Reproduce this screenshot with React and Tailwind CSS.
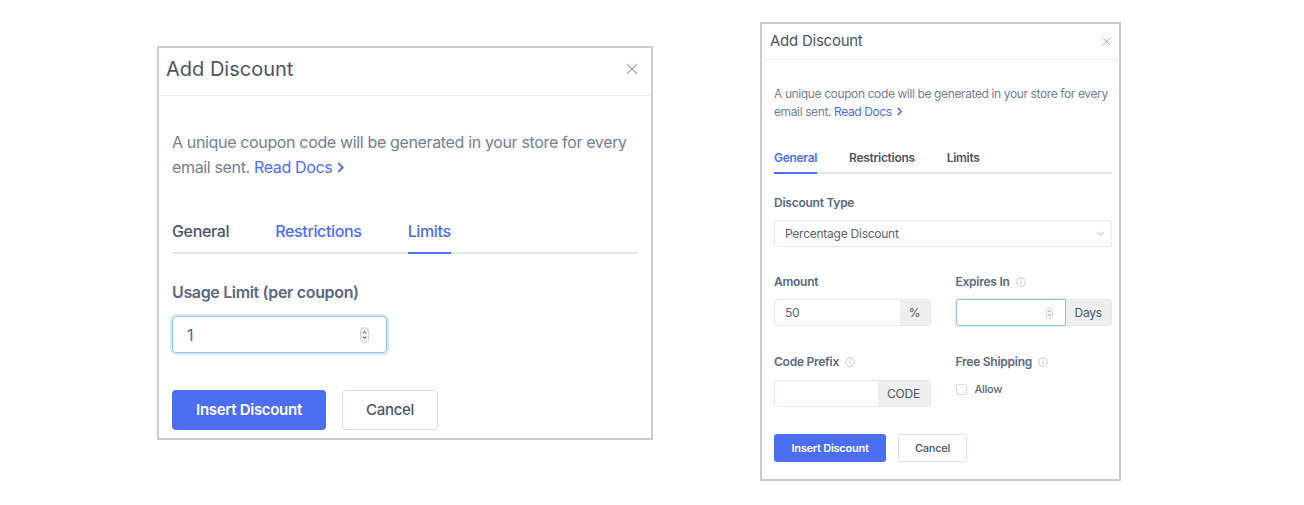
import React from "react";

const font = { fontFamily: "Inter, 'Noto Sans', sans-serif" };

function CloseIcon({ size }) {
  return (
    <svg width={size} height={size} viewBox="0 0 12 12" fill="none" stroke="#a0a8b4" strokeWidth="1.1">
      <path d="M1 1 L11 11 M11 1 L1 11" />
    </svg>
  );
}

function Chevron({ size }) {
  return (
    <svg width={size} height={size} viewBox="0 0 10 10" fill="none" stroke="#4c6ef5" strokeWidth="1.8" strokeLinecap="round" strokeLinejoin="round" className="inline-block align-middle ml-[3px] -mt-[2px]">
      <path d="M3.5 1.5 L7 5 L3.5 8.5" />
    </svg>
  );
}

function Spinner({ w, h }) {
  return (
    <svg width={w} height={h} viewBox="0 0 8 14" fill="none">
      <rect x="0.5" y="0.5" width="7" height="13" rx="3.5" stroke="#c9ced6" fill="#fafafa" />
      <path d="M2.5 5.5 L4 4 L5.5 5.5" stroke="#5a6270" strokeWidth="0.9" />
      <path d="M2.5 8.5 L4 10 L5.5 8.5" stroke="#5a6270" strokeWidth="0.9" />
    </svg>
  );
}

function Info() {
  return (
    <svg width="10" height="10" viewBox="0 0 10 10" fill="none" className="ml-[6px]">
      <circle cx="5" cy="5" r="4.3" stroke="#b5bcc7" strokeWidth="0.8" />
      <path d="M5 4.3 V7.3" stroke="#b5bcc7" strokeWidth="0.9" />
      <circle cx="5" cy="2.9" r="0.55" fill="#b5bcc7" />
    </svg>
  );
}

function LeftDialog() {
  return (
    <div className="mt-[46px] w-[496px] h-[394px] border-2 border-[#cccccc] bg-white flex flex-col">
      <div className="h-[48px] border-b border-[#edf0f4] flex items-start justify-between pl-[7px] pr-[13px] pt-[7px]">
        <span className="text-[20px] leading-[28px] text-[#4a5568]">Add Discount</span>
        <span className="mt-[8px]"><CloseIcon size={12} /></span>
      </div>
      <div className="pl-[13px] pr-[14px] pt-[34px] flex flex-col">
        <p className="text-[16px] leading-[25px] text-[#718096] tracking-[-0.35px]">
          A unique coupon code will be generated in your store for every email sent.{" "}
          <span className="text-[#4c6ef5]">Read Docs</span>
          <Chevron size={11} />
        </p>
        <div className="mt-[39px] flex gap-[46px] border-b-2 border-[#e2e8f0] text-[16px] leading-[24px] font-medium tracking-[-0.35px]">
          <span className="pb-[9px] -mb-[2px] text-[#4a5568]">General</span>
          <span className="pb-[9px] -mb-[2px] text-[#4c6ef5]">Restrictions</span>
          <span className="pb-[9px] -mb-[2px] text-[#4c6ef5] border-b-2 border-[#4c6ef5]">Limits</span>
        </div>
        <div className="mt-[26px] text-[16px] leading-[24px] font-semibold text-[#5a6882] tracking-[-0.35px]">Usage Limit (per coupon)</div>
        <div className="mt-[12px] w-[215px] h-[37px] rounded-[4px] border border-[#90c2f0] shadow-[0_0_0_2px_rgba(144,194,240,0.35)] flex items-center justify-between pl-[14px] pr-[17px]">
          <span className="text-[16px] text-[#5a6270]">1</span>
          <Spinner w={9} h={16} />
        </div>
        <div className="mt-[37px] flex gap-[16px]">
          <button className="w-[154px] h-[40px] rounded-[4px] bg-[#4c6ef5] text-white text-[15px] font-semibold tracking-[-0.3px]">Insert Discount</button>
          <button className="w-[96px] h-[40px] rounded-[4px] border border-[#d5dde6] bg-white text-[#4a5568] text-[15px] font-medium tracking-[-0.3px]">Cancel</button>
        </div>
      </div>
    </div>
  );
}

function Addon({ children, w }) {
  return (
    <div className={`h-full flex items-center justify-center bg-[#eeeeee] text-[#4a5568] text-[12px] ${w}`}>{children}</div>
  );
}

function RightDialog() {
  return (
    <div className="mt-[22px] w-[361px] h-[459px] border-2 border-[#cccccc] bg-white flex flex-col tracking-[-0.25px]">
      <div className="h-[36px] border-b border-[#edf0f4] flex items-center justify-between pl-[8px] pr-[8px]">
        <span className="text-[15px] text-[#4a5568]">Add Discount</span>
        <CloseIcon size={9} />
      </div>
      <div className="pl-[12px] pr-[7px] pt-[25px] flex flex-col">
        <p className="text-[12px] leading-[18px] text-[#718096] tracking-[-0.38px] -mr-[4px]">
          A unique coupon code will be generated in your store for every email sent.{" "}
          <span className="text-[#4c6ef5]">Read Docs</span>
          <Chevron size={9} />
        </p>
        <div className="mt-[29px] flex gap-[32px] border-b-2 border-[#e2e8f0] text-[12px] leading-[16px] font-semibold tracking-[-0.3px]">
          <span className="pb-[6px] -mb-[2px] text-[#4c6ef5] border-b-2 border-[#4c6ef5]">General</span>
          <span className="pb-[6px] -mb-[2px] text-[#4a5568]">Restrictions</span>
          <span className="pb-[6px] -mb-[2px] text-[#4a5568]">Limits</span>
        </div>
        <div className="mt-[21px] text-[12px] leading-[16px] font-semibold text-[#5a6882]">Discount Type</div>
        <div className="mt-[9px] h-[27px] rounded-[3px] border border-[#e2e8f0] flex items-center justify-between pl-[10px] pr-[6px]">
          <span className="text-[12px] text-[#5a6270]">Percentage Discount</span>
          <svg width="9" height="6" viewBox="0 0 9 6" fill="none" stroke="#cbd2dc" strokeWidth="1.1">
            <path d="M1 1 L4.5 4.5 L8 1" />
          </svg>
        </div>
        <div className="mt-[27px] grid grid-cols-2 gap-x-[25px]">
          <div className="flex flex-col">
            <div className="text-[12px] leading-[16px] font-semibold text-[#5a6882]">Amount</div>
            <div className="mt-[9px] h-[27px] flex rounded-[3px] border border-[#e2e8f0] overflow-hidden">
              <div className="flex-1 flex items-center pl-[10px] text-[12px] text-[#5a6270]">50</div>
              <Addon w="w-[30px]">%</Addon>
            </div>
            <div className="mt-[28px] flex items-center text-[12px] leading-[16px] font-semibold text-[#5a6882]">
              Code Prefix <Info />
            </div>
            <div className="mt-[10px] h-[27px] flex rounded-[3px] border border-[#e2e8f0] overflow-hidden">
              <div className="flex-1" />
              <Addon w="w-[52px]">CODE</Addon>
            </div>
          </div>
          <div className="flex flex-col">
            <div className="flex items-center text-[12px] leading-[16px] font-semibold text-[#5a6882]">
              Expires In <Info />
            </div>
            <div className="mt-[9px] h-[27px] flex">
              <div className="w-[110px] h-full rounded-l-[3px] border border-[#90c2f0] shadow-[0_0_0_1px_rgba(144,194,240,0.3)] flex items-center justify-end pr-[12px]">
                <Spinner w={7} h={12} />
              </div>
              <div className="flex-1 h-full rounded-r-[3px] border border-l-0 border-[#e2e8f0] overflow-hidden">
                <Addon w="w-full">Days</Addon>
              </div>
            </div>
            <div className="mt-[28px] flex items-center text-[12px] leading-[16px] font-semibold text-[#5a6882]">
              Free Shipping <Info />
            </div>
            <div className="mt-[11px] flex items-center gap-[8px]">
              <div className="w-[11px] h-[11px] rounded-[2px] border border-[#d5dbe3] bg-white" />
              <span className="text-[11px] font-medium text-[#5a6882]">Allow</span>
            </div>
          </div>
        </div>
        <div className="mt-[27px] flex gap-[12px]">
          <button className="w-[112px] h-[28px] rounded-[3px] bg-[#4c6ef5] text-white text-[11px] font-semibold">Insert Discount</button>
          <button className="w-[69px] h-[28px] rounded-[3px] border border-[#d5dde6] bg-white text-[#4a5568] text-[11px] font-medium">Cancel</button>
        </div>
      </div>
    </div>
  );
}

export default function App() {
  return (
    <div className="w-[1304px] h-[505px] bg-white flex items-start pl-[157px] gap-[107px]" style={font}>
      <LeftDialog />
      <RightDialog />
    </div>
  );
}
